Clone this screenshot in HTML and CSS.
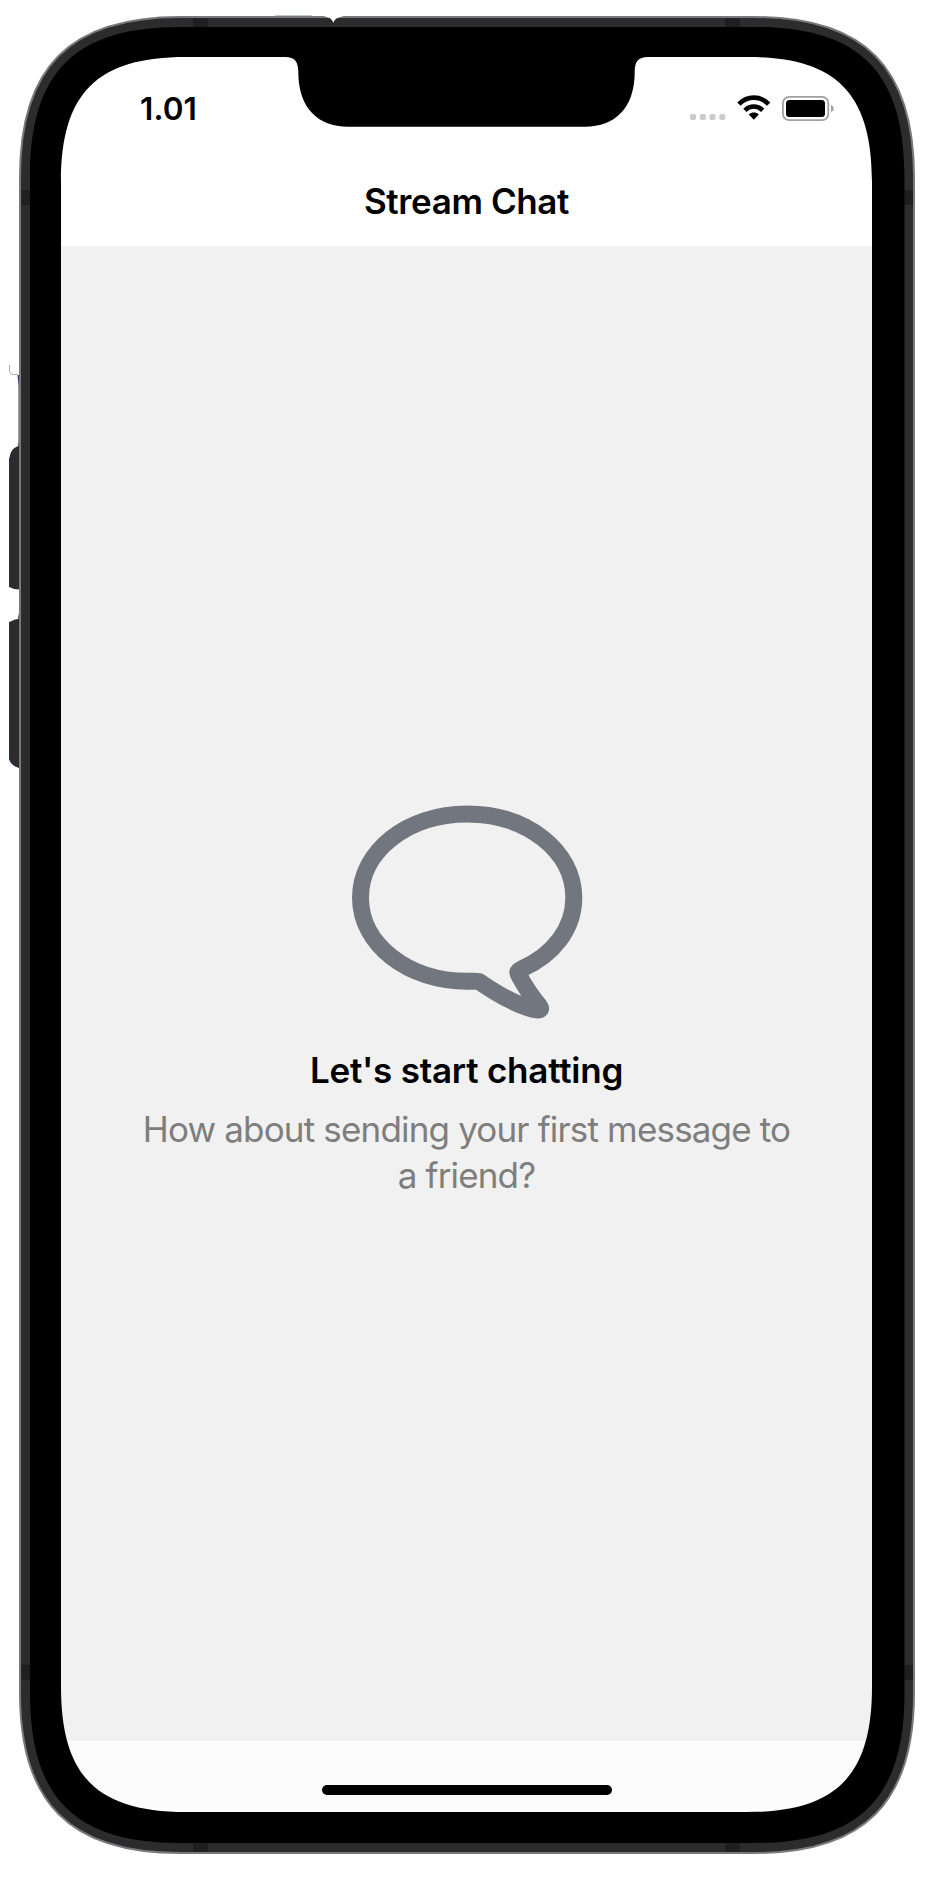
FILE: index.html
```
<!DOCTYPE html>
<html lang="en">
<head>
<meta charset="utf-8">
<title>Stream Chat</title>
<link rel="stylesheet" href="styles.css">
</head>
<body>
<div class="phone">
  <main class="screen">
    <header class="top">
      <div class="status">
        <span class="time">1.01</span>
        <div class="indicators">
          <svg class="signal" width="36" height="6" viewBox="0 0 36 6" fill="#cbcbcb"><rect width="6" height="6" rx="1.7"/><rect x="9.8" width="6" height="6" rx="1.7"/><rect x="19.5" width="6" height="6" rx="1.7"/><rect x="29.3" width="6" height="6" rx="1.7"/></svg>
          <svg class="wifi" width="34" height="25" viewBox="0 0 34 25"><g fill="none" stroke="#000" stroke-width="4.6"><path d="M1.900 9.200C10.200 .4 23.400 .4 31.700 9.200"/><path d="M7.900 15.300C13 10.300 20.600 10.300 25.700 15.300"/></g><path d="M11.800 19.400C14.700 17 18.900 17 21.800 19.400L16.800 24.700Z"/></svg>
          <svg class="battery" width="53" height="25" viewBox="0 0 53 25"><rect x=".9" y=".9" width="45.4" height="23.2" rx="6.2" fill="none" stroke="#a0a0a0" stroke-width="1.8"/><rect x="4" y="4" width="39" height="17" rx="3.5"/><path d="M49 9C52.600 10 52.600 15 49 16Z" fill="#a0a0a0"/></svg>
        </div>
      </div>
      <h1 class="title">Stream Chat</h1>
    </header>
    <section class="empty">
      <svg class="bubble" width="232" height="216" viewBox="351 804 232 216"><path d="M479 981.500C476 980.900 473 981.300 467.500 981.300C407.500 981.300 360.500 944 360.500 897.700C360.500 851 407.500 814 467.200 814C527 814 573.800 851 573.800 897.700C573.800 929 553 955 521.500 969C516.500 971.300 517.500 973 519 975.500C524 985 532 997 539.500 1006C542.500 1010 539 1010.500 534 1009.500C517 1005 497 994 479 981.500Z" fill="none" stroke="#72767e" stroke-width="17" stroke-linejoin="round"/></svg>
      <h2 class="heading">Let's start chatting</h2>
      <p class="hint">How about sending your first message to<br>a friend?</p>
    </section>
    <footer class="bottom"><div class="home"></div></footer>
  </main>
  <svg class="frame" width="932" height="1880" viewBox="0 0 932 1880">
    <path d="M9.500 365V371Q10 374.500 13 374.500H18" fill="none" stroke="#9097ad" stroke-width=".8"/>
    <path d="M17.500 375H20V450H18.500V386ZM18 445L19.500 435V449ZM18 618L19.500 610V620Z" fill="#344469"/>
    <path d="M20 445.500C14 447 9.500 451 9.500 460V587Q13 589.500 20 589.500ZM20 618.500Q14 619 9.500 622V759Q11 766 20 768Z" fill="#2c2c2c"/>
    <path d="M9.500 458V587M9.500 622V759Q11 765 19 767.500" fill="none" stroke="#1b2e60"/>
    <path fill-rule="evenodd" fill="#2c2c2c" d="M180 17H754C864 17 914 67 914 177V1693C914 1803 864 1853 754 1853H180C70 1853 20 1803 20 1693V177C20 67 70 17 180 17Z
    M155 42H778A110 110 0 0 1 888 152V1717A110 110 0 0 1 778 1827H155A110 110 0 0 1 45 1717V152A110 110 0 0 1 155 42Z"/>
    <path fill="none" stroke="#77797d" stroke-width="2" d="M180 17H754C864 17 914 67 914 177V1693C914 1803 864 1853 754 1853H180C70 1853 20 1803 20 1693V177C20 67 70 17 180 17Z"/>
    <path fill="#1f1f1f" d="M193 18.500h15V27h-15ZM725 18.500h15V27h-15ZM193 1843h15v8.500h-15ZM725 1843h15v8.500h-15ZM21.500 190H30v15h-8.500ZM904.500 190h8.500v15h-8.500ZM21.500 1665H30v15h-8.500ZM904.500 1665h8.500v15h-8.500Z"/>
    <path fill-rule="evenodd" d="M180 27H754.500C859.500 27 904.500 72 904.500 177V1693C904.500 1798 859.500 1843 754.500 1843H180C75 1843 30 1798 30 1693V177C30 72 75 27 180 27Z
    M186 57H285C295 57 298.300 62 298.300 72C298.300 108 318 126.700 348 126.700H585C615 126.700 634.700 108 634.700 72C634.700 62 638 57 648 57H747C836 57 872 93 872 182V1687C872 1776 836 1812 747 1812H186C97 1812 61 1776 61 1687V182C61 93 97 57 186 57Z"/>
    <path fill="#fff" d="M318 15.500C326 16 332 17.500 333.300 23C335 17.500 341 16 350 15.500Z"/>
    <path d="M275 15.500H312" stroke="#c4c8cf"/>
  </svg>
</div>
</body>
</html>
```
FILE: styles.css
```
* { box-sizing: border-box; }
body { margin: 0; background: #fff; font-family: Inter, "Liberation Sans", sans-serif; color: #000; }
h1, h2, p { margin: 0; }
.phone { position: relative; width: 932px; height: 1880px; padding: 57px 60px 68px 61px; overflow: hidden; }
.screen { width: 811px; height: 1755px; display: flex; flex-direction: column; background: #fff; border-radius: 80px; overflow: hidden; }
.frame { position: absolute; left: 0; top: 0; pointer-events: none; }
.top { height: 189px; flex: none; }
.status { display: flex; justify-content: space-between; height: 90px; padding: 36px 37px 0 79px; }
.time { font-size: 31.5px; font-weight: 600; line-height: 32px; letter-spacing: 0.1px; }
.indicators { display: flex; height: 32px; padding-top: 2px; }
.signal { margin: 19px 11px 0 0; }
.wifi { margin-right: 11px; }
.battery { margin-top: 1px; }
.title { font-size: 35px; font-weight: 600; line-height: 40px; text-align: center; margin-top: 34px; letter-spacing: -0.4px; }
.empty { flex: 1; background: #f1f1f1; display: flex; flex-direction: column; align-items: center; padding-top: 558px; }
.bubble { flex: none; }
.heading { font-size: 35px; font-weight: 600; line-height: 44px; margin-top: 28px; letter-spacing: -0.22px; white-space: nowrap; }
.hint { font-size: 35px; line-height: 45.500px; color: #7e7e7e; text-align: center; margin-top: 15px; letter-spacing: -0.83px; white-space: nowrap; }
.bottom { height: 71px; flex: none; background: #fcfcfc; padding: 44px 0 0 261px; }
.home { width: 290px; height: 10px; border-radius: 5px; background: #000; }
```
